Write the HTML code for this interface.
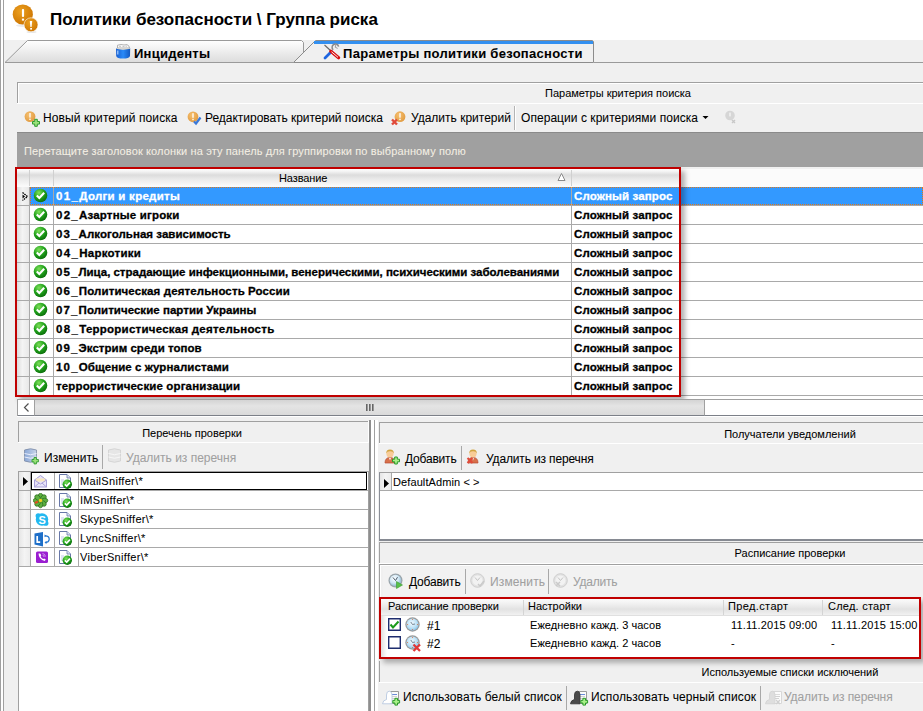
<!DOCTYPE html>
<html><head><meta charset="utf-8">
<style>
*{box-sizing:border-box;margin:0;padding:0}
html,body{width:923px;height:711px;overflow:hidden;background:#f0f0f0;font-family:"Liberation Sans",sans-serif;color:#000}
.a{position:absolute}
.t{position:absolute;white-space:nowrap;line-height:1;-webkit-text-stroke-width:0.06px}
.f11{font-size:11px}
.f12{font-size:12px}
.b{font-weight:bold}
.hdr{position:absolute;border-top:1px solid #a0a0a0;border-left:1px solid #a0a0a0;box-shadow:inset 1px 1px 0 #fff;background:#f0f0f0}
.hline{position:absolute;height:1px;background:#fff}
.sep{position:absolute;width:1px;background:#b4b4b4;box-shadow:1px 0 0 #fff}
.gl{position:absolute;background:#a9a9a9}
.dis{color:#a8a8a8}
</style></head><body>
<!-- left edge lines -->
<div class="a" style="left:0;top:0;width:1px;height:711px;background:#a0a0a0"></div>
<div class="a" style="left:1px;top:0;width:2px;height:711px;background:#fff"></div>
<div class="a" style="left:3px;top:0;width:1px;height:711px;background:#a0a0a0"></div>
<!-- title -->
<div class="a" style="left:4px;top:0;width:919px;height:40px;background:#fff"></div>
<div class="t b" style="left:50px;top:11px;font-size:17px">Политики безопасности \ Группа риска</div>


<!-- tabs -->
<svg class="a" style="left:0;top:0" width="923" height="70">
<defs>
<linearGradient id="tg1" x1="0" y1="0" x2="0" y2="1"><stop offset="0" stop-color="#ffffff"/><stop offset="1" stop-color="#dcdcdc"/></linearGradient>
<radialGradient id="og" cx="0.4" cy="0.35" r="0.7"><stop offset="0" stop-color="#eca020"/><stop offset="1" stop-color="#cc7400"/></radialGradient>
<linearGradient id="bg1" x1="0" y1="0" x2="1" y2="0"><stop offset="0" stop-color="#1a5fd0"/><stop offset="0.5" stop-color="#2a8af8"/><stop offset="1" stop-color="#1458c0"/></linearGradient>
</defs>
<polygon points="5,62.5 27.5,40.5 301.5,40.5 303.5,42.5 303.5,62.5" fill="url(#tg1)" stroke="#9a9a9a" stroke-width="1"/>
<polygon points="293.5,62.5 315.5,40.5 592.5,40.5 593.5,41.5 593.5,62.5" fill="#f0f0f0" stroke="#8c8c8c" stroke-width="1"/>
<rect x="314" y="41" width="279" height="3" fill="#3390f0"/>
<line x1="5" y1="62.5" x2="294" y2="62.5" stroke="#9a9a9a"/>
<line x1="594" y1="62.5" x2="923" y2="62.5" stroke="#9a9a9a"/>
<!-- title icon -->
<ellipse cx="23" cy="25.5" rx="7" ry="1.5" fill="#000" opacity="0.08"/>
<circle cx="22.8" cy="14.5" r="10.1" fill="url(#og)"/>
<rect x="21.9" y="9" width="2.2" height="8" fill="#fff" rx="1"/>
<rect x="21.9" y="18.6" width="2.2" height="2" fill="#fff"/>
<ellipse cx="31.5" cy="32" rx="5" ry="1" fill="#000" opacity="0.1"/>
<circle cx="31" cy="24.8" r="7" fill="url(#og)" stroke="#fff" stroke-width="0.6"/>
<path d="M29.8,21 L32.2,21 L31.6,27 L30.4,27 Z" fill="#fff"/>
<rect x="30.2" y="28" width="1.8" height="1.6" fill="#fff"/>
<!-- incidents icon -->
<path d="M117.5,48 L117.5,45.2 L121,44.5 L124,45 L127,44.6 L129,46.2 L129.5,48 Z" fill="#fafafa" stroke="#a0a0a0" stroke-width="0.8"/>
<path d="M119,46.3 h2 M122.5,46.5 h2 M125.5,46.2 h1.5" stroke="#b8b8b8" stroke-width="0.8"/>
<path d="M116,48.2 Q123,50.5 130.2,48.2 L130,56 Q129,58.6 123,58.6 Q117,58.6 116.2,56 Z" fill="url(#bg1)"/>
<path d="M116.5,48.4 Q123,50.4 129.8,48.4" fill="none" stroke="#f0e0c8" stroke-width="0.8"/>
<rect x="117.2" y="50.5" width="1.2" height="4" fill="#a8d0ff"/>
<!-- tools icon -->
<line x1="324.5" y1="45" x2="331" y2="51" stroke="#666" stroke-width="1.1"/>
<line x1="325" y1="58" x2="331.5" y2="51.5" stroke="#1f66e0" stroke-width="2.8" stroke-linecap="round"/>
<path d="M333.2,49.8 A3.3,3.3 0 1 1 338.6,46.6" fill="none" stroke="#8a8a8a" stroke-width="1.5"/>
<path d="M336,44.2 L335.2,47.2 L337.6,48.4" fill="none" stroke="#9a9a9a" stroke-width="1"/>
<line x1="330.8" y1="51.2" x2="338.6" y2="57.8" stroke="#d81010" stroke-width="3.2" stroke-linecap="round"/>
<line x1="331.5" y1="51.8" x2="338" y2="57.3" stroke="#fff" stroke-width="0.9"/>
</svg>
<div class="t b" style="left:134px;top:47px;font-size:13px;letter-spacing:0.25px">Инциденты</div>
<div class="t b" style="left:343px;top:47px;font-size:13px;letter-spacing:0.3px">Параметры политики безопасности</div>

<!-- search criteria panel header -->
<div class="hdr" style="left:17px;top:82px;width:906px;height:21px"></div>
<div class="a" style="left:17px;top:103px;width:906px;height:1px;background:#fff"></div>
<div class="t f11" style="left:545px;top:88px">Параметры критерия поиска</div>

<!-- toolbar -->
<div class="t f12" style="left:43px;top:112px;letter-spacing:0.1px">Новый критерий поиска</div>
<div class="t f12" style="left:205px;top:112px;letter-spacing:-0.02px">Редактировать критерий поиска</div>
<div class="t f12" style="left:411px;top:112px">Удалить критерий</div>
<div class="sep" style="left:514px;top:106px;height:24px"></div>
<div class="t f12" style="left:521px;top:112px;letter-spacing:0.05px">Операции с критериями поиска</div>

<!-- group panel -->
<div class="a" style="left:17px;top:132px;width:906px;height:35px;background:#a0a0a0;border-top:1px solid #8a8a8a"></div>
<div class="t f11" style="left:24px;top:146px;color:#f4efe4;letter-spacing:0.125px">Перетащите заголовок колонки на эту панель для группировки по выбранному полю</div>

<svg width="0" height="0" style="position:absolute"><defs>
<radialGradient id="gg" cx="0.38" cy="0.3" r="0.75"><stop offset="0" stop-color="#7ee05a"/><stop offset="0.55" stop-color="#1fa01a"/><stop offset="1" stop-color="#0a6a0a"/></radialGradient>
<symbol id="chk" viewBox="0 0 15 15"><circle cx="7.5" cy="7.5" r="6.8" fill="url(#gg)"/><path d="M3.8,7.6 L6.3,10 L11.2,4.8" fill="none" stroke="#fff" stroke-width="2.1"/></symbol>
</defs></svg>
<svg width="0" height="0" style="position:absolute"><defs>
<radialGradient id="og2" cx="0.4" cy="0.35" r="0.7"><stop offset="0" stop-color="#f6c070"/><stop offset="1" stop-color="#e09a40"/></radialGradient>
</defs></svg>
<svg class="a" style="left:20px;top:106px" width="24" height="22"><circle cx="10" cy="10.6" r="5.4" fill="url(#og2)"/><rect x="9.2" y="7.0" width="1.6" height="4.6" fill="#fff" opacity="0.85"/><rect x="9.2" y="12.6" width="1.6" height="1.4" fill="#fff" opacity="0.85"/><path d="M12.5,15.5 h2.2 v-2.2 h2.6 v2.2 h2.2 v2.6 h-2.2 v2.2 h-2.6 v-2.2 h-2.2 Z" fill="#9be27a" stroke="#2f9a2f" stroke-width="1"/></svg>
<svg class="a" style="left:183px;top:106px" width="24" height="22"><circle cx="10" cy="10.8" r="5.4" fill="url(#og2)"/><rect x="9.2" y="7.200000000000001" width="1.6" height="4.6" fill="#fff" opacity="0.85"/><rect x="9.2" y="12.8" width="1.6" height="1.4" fill="#fff" opacity="0.85"/><path d="M11,15.5 L13,17.5 L17.5,11.5" fill="none" stroke="#3a78d8" stroke-width="2.2"/></svg>
<svg class="a" style="left:387px;top:106px" width="24" height="22"><circle cx="13" cy="10.7" r="5.4" fill="url(#og2)"/><rect x="12.2" y="7.1" width="1.6" height="4.6" fill="#fff" opacity="0.85"/><rect x="12.2" y="12.7" width="1.6" height="1.4" fill="#fff" opacity="0.85"/><path d="M5,13.5 L10,18.5 M10,13.5 L5,18.5" stroke="#e04a3a" stroke-width="2.4"/></svg>
<svg class="a" style="left:702px;top:115px" width="8" height="6"><path d="M0.5,1 L6.5,1 L3.5,4 Z" fill="#000"/></svg>
<svg class="a" style="left:722px;top:108px" width="18" height="18"><circle cx="8" cy="7.5" r="4.8" fill="#d6d6d6"/><rect x="7.3" y="4.6" width="1.4" height="3.8" fill="#f4f4f4"/><path d="M10,12 L13,15 M13,12 L10,15" stroke="#c8c8c8" stroke-width="1.4"/></svg>
<!-- main grid -->
<div class="a" style="left:17px;top:169px;width:906px;height:230px;background:#fff"></div>
<div class="a" style="left:17px;top:169px;width:906px;height:18px;background:linear-gradient(#fdfdfd 0px,#f6f6f6 2px,#dcdcdc 6px,#ececec 11px,#fafafa 17px)"></div>
<div class="a" style="left:29px;top:170px;width:1px;height:16px;background:#d0d0d0"></div>
<div class="a" style="left:53px;top:170px;width:1px;height:16px;background:#d0d0d0"></div>
<div class="a" style="left:571px;top:170px;width:1px;height:16px;background:#d0d0d0"></div>
<div class="a" style="left:680px;top:170px;width:1px;height:16px;background:#d0d0d0"></div>
<div class="t f11" style="left:279px;top:173px;letter-spacing:-0.1px">Название</div>
<svg class="a" style="left:556px;top:171px" width="12" height="12"><path d="M5.5,2.5 L9,9.5 L2,9.5 Z" fill="#fff" stroke="#8a8a8a" stroke-width="1"/></svg>
<div class="a" style="left:17px;top:187px;width:12px;height:18px;background:linear-gradient(90deg,#dcdcdc,#f4f4f4 45%,#e8e8e8)"></div>
<div class="a" style="left:17px;top:205px;width:906px;height:1px;background:#a9a9a9"></div>
<div class="a" style="left:30px;top:187px;width:893px;height:18px;background:#3399ff"></div>
<div class="a" style="left:30px;top:187px;width:893px;height:18px;border:1px dotted #e07818"></div>
<svg class="a" style="left:20px;top:191px" width="9" height="11"><path d="M2.5,1.5 L7.5,5.5 L2.5,9.5" fill="none" stroke="#000" stroke-width="1.3" stroke-dasharray="1.6,0.8"/><path d="M2.5,3.5 L5,5.5 L2.5,7.5 Z" fill="#000"/></svg>
<svg class="a" style="left:33px;top:188px" width="15" height="15"><use href="#chk"/></svg>
<div class="t b" style="left:56px;top:191px;font-size:11.5px;color:#fff;letter-spacing:0.265px;-webkit-text-stroke:0.3px #fff"><span style="letter-spacing:1.365px">01_</span>Долги и кредиты</div>
<div class="t b" style="left:574px;top:191px;font-size:11.5px;color:#fff;letter-spacing:0.12px;-webkit-text-stroke:0.3px #fff">Сложный запрос</div>
<div class="a" style="left:17px;top:206px;width:12px;height:18px;background:linear-gradient(90deg,#dcdcdc,#f4f4f4 45%,#e8e8e8)"></div>
<div class="a" style="left:17px;top:224px;width:906px;height:1px;background:#a9a9a9"></div>
<svg class="a" style="left:33px;top:207px" width="15" height="15"><use href="#chk"/></svg>
<div class="t b" style="left:56px;top:210px;font-size:11.5px;color:#000;letter-spacing:0.176px;-webkit-text-stroke:0.3px #000"><span style="letter-spacing:1.276px">02_</span>Азартные игроки</div>
<div class="t b" style="left:574px;top:210px;font-size:11.5px;color:#000;letter-spacing:0.12px;-webkit-text-stroke:0.3px #000">Сложный запрос</div>
<div class="a" style="left:17px;top:225px;width:12px;height:18px;background:linear-gradient(90deg,#dcdcdc,#f4f4f4 45%,#e8e8e8)"></div>
<div class="a" style="left:17px;top:243px;width:906px;height:1px;background:#a9a9a9"></div>
<svg class="a" style="left:33px;top:226px" width="15" height="15"><use href="#chk"/></svg>
<div class="t b" style="left:56px;top:229px;font-size:11.5px;color:#000;letter-spacing:0.040px;-webkit-text-stroke:0.3px #000"><span style="letter-spacing:1.140px">03_</span>Алкогольная зависимость</div>
<div class="t b" style="left:574px;top:229px;font-size:11.5px;color:#000;letter-spacing:0.12px;-webkit-text-stroke:0.3px #000">Сложный запрос</div>
<div class="a" style="left:17px;top:244px;width:12px;height:18px;background:linear-gradient(90deg,#dcdcdc,#f4f4f4 45%,#e8e8e8)"></div>
<div class="a" style="left:17px;top:262px;width:906px;height:1px;background:#a9a9a9"></div>
<svg class="a" style="left:33px;top:245px" width="15" height="15"><use href="#chk"/></svg>
<div class="t b" style="left:56px;top:248px;font-size:11.5px;color:#000;letter-spacing:0.245px;-webkit-text-stroke:0.3px #000"><span style="letter-spacing:1.345px">04_</span>Наркотики</div>
<div class="t b" style="left:574px;top:248px;font-size:11.5px;color:#000;letter-spacing:0.12px;-webkit-text-stroke:0.3px #000">Сложный запрос</div>
<div class="a" style="left:17px;top:263px;width:12px;height:18px;background:linear-gradient(90deg,#dcdcdc,#f4f4f4 45%,#e8e8e8)"></div>
<div class="a" style="left:17px;top:281px;width:906px;height:1px;background:#a9a9a9"></div>
<svg class="a" style="left:33px;top:264px" width="15" height="15"><use href="#chk"/></svg>
<div class="t b" style="left:56px;top:267px;font-size:11.5px;color:#000;letter-spacing:-0.016px;-webkit-text-stroke:0.3px #000"><span style="letter-spacing:1.084px">05_</span>Лица, страдающие инфекционными, венерическими, психическими заболеваниями</div>
<div class="t b" style="left:574px;top:267px;font-size:11.5px;color:#000;letter-spacing:0.12px;-webkit-text-stroke:0.3px #000">Сложный запрос</div>
<div class="a" style="left:17px;top:282px;width:12px;height:18px;background:linear-gradient(90deg,#dcdcdc,#f4f4f4 45%,#e8e8e8)"></div>
<div class="a" style="left:17px;top:300px;width:906px;height:1px;background:#a9a9a9"></div>
<svg class="a" style="left:33px;top:283px" width="15" height="15"><use href="#chk"/></svg>
<div class="t b" style="left:56px;top:286px;font-size:11.5px;color:#000;letter-spacing:0.112px;-webkit-text-stroke:0.3px #000"><span style="letter-spacing:1.212px">06_</span>Политическая деятельность России</div>
<div class="t b" style="left:574px;top:286px;font-size:11.5px;color:#000;letter-spacing:0.12px;-webkit-text-stroke:0.3px #000">Сложный запрос</div>
<div class="a" style="left:17px;top:301px;width:12px;height:18px;background:linear-gradient(90deg,#dcdcdc,#f4f4f4 45%,#e8e8e8)"></div>
<div class="a" style="left:17px;top:319px;width:906px;height:1px;background:#a9a9a9"></div>
<svg class="a" style="left:33px;top:302px" width="15" height="15"><use href="#chk"/></svg>
<div class="t b" style="left:56px;top:305px;font-size:11.5px;color:#000;letter-spacing:0.038px;-webkit-text-stroke:0.3px #000"><span style="letter-spacing:1.138px">07_</span>Политические партии Украины</div>
<div class="t b" style="left:574px;top:305px;font-size:11.5px;color:#000;letter-spacing:0.12px;-webkit-text-stroke:0.3px #000">Сложный запрос</div>
<div class="a" style="left:17px;top:320px;width:12px;height:18px;background:linear-gradient(90deg,#dcdcdc,#f4f4f4 45%,#e8e8e8)"></div>
<div class="a" style="left:17px;top:338px;width:906px;height:1px;background:#a9a9a9"></div>
<svg class="a" style="left:33px;top:321px" width="15" height="15"><use href="#chk"/></svg>
<div class="t b" style="left:56px;top:324px;font-size:11.5px;color:#000;letter-spacing:0.242px;-webkit-text-stroke:0.3px #000"><span style="letter-spacing:1.342px">08_</span>Террористическая деятельность</div>
<div class="t b" style="left:574px;top:324px;font-size:11.5px;color:#000;letter-spacing:0.12px;-webkit-text-stroke:0.3px #000">Сложный запрос</div>
<div class="a" style="left:17px;top:339px;width:12px;height:18px;background:linear-gradient(90deg,#dcdcdc,#f4f4f4 45%,#e8e8e8)"></div>
<div class="a" style="left:17px;top:357px;width:906px;height:1px;background:#a9a9a9"></div>
<svg class="a" style="left:33px;top:340px" width="15" height="15"><use href="#chk"/></svg>
<div class="t b" style="left:56px;top:343px;font-size:11.5px;color:#000;letter-spacing:0.029px;-webkit-text-stroke:0.3px #000"><span style="letter-spacing:1.129px">09_</span>Экстрим среди топов</div>
<div class="t b" style="left:574px;top:343px;font-size:11.5px;color:#000;letter-spacing:0.12px;-webkit-text-stroke:0.3px #000">Сложный запрос</div>
<div class="a" style="left:17px;top:358px;width:12px;height:18px;background:linear-gradient(90deg,#dcdcdc,#f4f4f4 45%,#e8e8e8)"></div>
<div class="a" style="left:17px;top:376px;width:906px;height:1px;background:#a9a9a9"></div>
<svg class="a" style="left:33px;top:359px" width="15" height="15"><use href="#chk"/></svg>
<div class="t b" style="left:56px;top:362px;font-size:11.5px;color:#000;letter-spacing:0.075px;-webkit-text-stroke:0.3px #000"><span style="letter-spacing:1.175px">10_</span>Общение с журналистами</div>
<div class="t b" style="left:574px;top:362px;font-size:11.5px;color:#000;letter-spacing:0.12px;-webkit-text-stroke:0.3px #000">Сложный запрос</div>
<div class="a" style="left:17px;top:377px;width:12px;height:18px;background:linear-gradient(90deg,#dcdcdc,#f4f4f4 45%,#e8e8e8)"></div>
<div class="a" style="left:17px;top:395px;width:906px;height:1px;background:#a9a9a9"></div>
<svg class="a" style="left:33px;top:378px" width="15" height="15"><use href="#chk"/></svg>
<div class="t b" style="left:56px;top:381px;font-size:11.5px;color:#000;letter-spacing:0.137px;-webkit-text-stroke:0.3px #000">террористические организации</div>
<div class="t b" style="left:574px;top:381px;font-size:11.5px;color:#000;letter-spacing:0.12px;-webkit-text-stroke:0.3px #000">Сложный запрос</div>
<div class="a" style="left:29px;top:187px;width:1px;height:209px;background:#a9a9a9"></div>
<div class="a" style="left:53px;top:187px;width:1px;height:209px;background:#a9a9a9"></div>
<div class="a" style="left:571px;top:187px;width:1px;height:209px;background:#a9a9a9"></div>
<div class="a" style="left:680px;top:187px;width:1px;height:209px;background:#a9a9a9"></div>
<div class="a" style="left:681px;top:169px;width:242px;height:18px;background:#fbfbfb"></div>
<div class="a" style="left:15px;top:167px;width:666px;height:230px;border:2px solid #c00000;box-shadow:4px 4px 5px rgba(0,0,0,0.3)"></div>
<div class="a" style="left:17px;top:399px;width:906px;height:17px;background:#fff;border-top:1px solid #a0a0a0;border-bottom:1px solid #7c8088"></div>
<div class="a" style="left:17px;top:399px;width:1px;height:17px;background:#a0a0a0"></div>
<div class="a" style="left:34px;top:399px;width:671px;height:17px;background:linear-gradient(#d4d4d4,#e4e4e4 40%,#dadada);border:1px solid #a0a0a0;border-bottom:1px solid #7c8088"></div>
<svg class="a" style="left:22px;top:402px" width="10" height="12"><path d="M6.5,1.5 L2.5,5.5 L6.5,9.5" fill="none" stroke="#505050" stroke-width="1.2"/></svg>
<svg class="a" style="left:365px;top:403px" width="10" height="9"><rect x="1" y="1" width="1.6" height="7" fill="#666"/><rect x="4" y="1" width="1.6" height="7" fill="#666"/><rect x="7" y="1" width="1.6" height="7" fill="#666"/></svg>
<div class="a" style="left:17px;top:416px;width:906px;height:1px;background:#fff"></div>
<div class="a" style="left:369px;top:420px;width:2px;height:291px;background:#8e8e8e"></div>
<div class="a" style="left:371px;top:420px;width:3px;height:291px;background:#fff"></div>
<div class="a" style="left:374px;top:420px;width:1px;height:291px;background:#a0a0a0"></div>
<div class="a" style="left:375px;top:420px;width:3px;height:291px;background:#fff"></div>
<div class="a" style="left:18px;top:421px;width:351px;height:21px;border-top:1px solid #a0a0a0;border-left:1px solid #a0a0a0"></div>
<div class="a" style="left:18px;top:442px;width:351px;height:1px;background:#fff"></div>
<div class="t f11" style="left:-108px;top:428px;width:600px;text-align:center">Перечень проверки</div>
<div class="a" style="left:368px;top:421px;width:1px;height:21px;background:#fff"></div>
<svg class="a" style="left:22px;top:447px" width="18" height="18"><defs><linearGradient id="db" x1="0" y1="0" x2="1" y2="0"><stop offset="0" stop-color="#8aa8d8"/><stop offset="1" stop-color="#c8d4e8"/></linearGradient></defs><path d="M2.5,3 Q8.5,0.5 14.5,3 L14.5,14 Q8.5,16.5 2.5,14 Z" fill="url(#db)" stroke="#7c8aa4" stroke-width="0.8"/><path d="M2.5,6.5 Q8.5,9 14.5,6.5 M2.5,10 Q8.5,12.5 14.5,10" fill="none" stroke="#f0f4ff" stroke-width="0.9"/><path d="M10,12.5 h2 v-2 h2.4 v2 h2 v2.4 h-2 v2 h-2.4 v-2 h-2 Z" fill="#9be27a" stroke="#2f9a2f" stroke-width="0.9"/></svg>
<div class="t f12" style="left:44px;top:452px;letter-spacing:0px">Изменить</div>
<div class="a" style="left:102px;top:445px;width:1px;height:24px;background:#a8a8a8"></div>
<svg class="a" style="left:106px;top:447px" width="18" height="18"><path d="M2.5,3 Q8.5,0.5 14.5,3 L14.5,14 Q8.5,16.5 2.5,14 Z" fill="#e6e6e6" stroke="#d0d0d0" stroke-width="0.8"/><path d="M2.5,6.5 Q8.5,9 14.5,6.5 M2.5,10 Q8.5,12.5 14.5,10" fill="none" stroke="#f8f8f8" stroke-width="0.9"/></svg>
<div class="t f12" style="left:126px;top:452px;color:#a0a0a0;letter-spacing:0px">Удалить из перечня</div>
<div class="a" style="left:18px;top:471px;width:351px;height:240px;background:#fff;border-top:1px solid #a0a0a0;border-left:1px solid #a0a0a0;border-right:1px solid #a0a0a0"></div>
<div class="a" style="left:19px;top:472px;width:11px;height:18px;background:linear-gradient(90deg,#e6e6e6,#f4f4f4 50%,#ececec)"></div>
<div class="a" style="left:19px;top:490px;width:349px;height:1px;background:#a9a9a9"></div>
<svg class="a" style="left:33px;top:474px" width="18" height="17"><path d="M1.5,6 L7.5,1.5 L13.5,6 L13.5,13 L1.5,13 Z" fill="#e8e4f8" stroke="#a8a0d8" stroke-width="1"/><path d="M3,4.5 h9 v3 h-9 Z" fill="#f8e8c0"/><path d="M1.5,6 L7.5,10 L13.5,6 M1.5,13 L6,9 M13.5,13 L9,9" fill="none" stroke="#a8a0d8" stroke-width="1"/></svg>
<svg class="a" style="left:58px;top:473px" width="16" height="17"><path d="M1.5,1.5 L9,1.5 L12.5,5 L12.5,14.5 L1.5,14.5 Z" fill="#fff" stroke="#6878a8" stroke-width="1"/><path d="M9,1.5 L9,5 L12.5,5" fill="#dde4f4" stroke="#6878a8" stroke-width="0.8"/><path d="M3,7 h3 M3,9 h2.5 M3,11 h2.5" stroke="#b8c4e4" stroke-width="0.9"/><circle cx="9.3" cy="11.3" r="4.7" fill="url(#gg)"/><path d="M6.8,11.3 L8.7,13.1 L11.9,9.6" fill="none" stroke="#fff" stroke-width="1.6"/></svg>
<div class="t f11" style="left:80px;top:476px;letter-spacing:0.3px">MailSniffer\*</div>
<div class="a" style="left:19px;top:491px;width:11px;height:18px;background:linear-gradient(90deg,#e6e6e6,#f4f4f4 50%,#ececec)"></div>
<div class="a" style="left:19px;top:509px;width:349px;height:1px;background:#a9a9a9"></div>
<svg class="a" style="left:33px;top:493px" width="18" height="17"><g fill="#5cb040" stroke="#2e6a20" stroke-width="0.7"><ellipse cx="7.5" cy="3.4" rx="2.3" ry="3.2" transform="rotate(0 7.5 7.5)"/><ellipse cx="7.5" cy="3.4" rx="2.3" ry="3.2" transform="rotate(45 7.5 7.5)"/><ellipse cx="7.5" cy="3.4" rx="2.3" ry="3.2" transform="rotate(90 7.5 7.5)"/><ellipse cx="7.5" cy="3.4" rx="2.3" ry="3.2" transform="rotate(135 7.5 7.5)"/><ellipse cx="7.5" cy="3.4" rx="2.3" ry="3.2" transform="rotate(180 7.5 7.5)"/><ellipse cx="7.5" cy="3.4" rx="2.3" ry="3.2" transform="rotate(225 7.5 7.5)"/><ellipse cx="7.5" cy="3.4" rx="2.3" ry="3.2" transform="rotate(270 7.5 7.5)"/><ellipse cx="7.5" cy="3.4" rx="2.3" ry="3.2" transform="rotate(315 7.5 7.5)"/></g><circle cx="7.5" cy="7.5" r="1.8" fill="#f0d020"/><path d="M2,10 L5,8.5" stroke="#e05020" stroke-width="2"/></svg>
<svg class="a" style="left:58px;top:492px" width="16" height="17"><path d="M1.5,1.5 L9,1.5 L12.5,5 L12.5,14.5 L1.5,14.5 Z" fill="#fff" stroke="#6878a8" stroke-width="1"/><path d="M9,1.5 L9,5 L12.5,5" fill="#dde4f4" stroke="#6878a8" stroke-width="0.8"/><path d="M3,7 h3 M3,9 h2.5 M3,11 h2.5" stroke="#b8c4e4" stroke-width="0.9"/><circle cx="9.3" cy="11.3" r="4.7" fill="url(#gg)"/><path d="M6.8,11.3 L8.7,13.1 L11.9,9.6" fill="none" stroke="#fff" stroke-width="1.6"/></svg>
<div class="t f11" style="left:80px;top:495px;letter-spacing:0.3px">IMSniffer\*</div>
<div class="a" style="left:19px;top:510px;width:11px;height:18px;background:linear-gradient(90deg,#e6e6e6,#f4f4f4 50%,#ececec)"></div>
<div class="a" style="left:19px;top:528px;width:349px;height:1px;background:#a9a9a9"></div>
<svg class="a" style="left:34px;top:512px" width="18" height="17"><circle cx="8" cy="7.5" r="6.2" fill="#22b8f0"/><circle cx="4.2" cy="3.8" r="2.6" fill="#22b8f0"/><circle cx="11.8" cy="11.2" r="2.6" fill="#22b8f0"/><text x="8.1" y="11.7" font-family="Liberation Sans" font-weight="bold" font-size="11" fill="#fff" text-anchor="middle">S</text></svg>
<svg class="a" style="left:58px;top:511px" width="16" height="17"><path d="M1.5,1.5 L9,1.5 L12.5,5 L12.5,14.5 L1.5,14.5 Z" fill="#fff" stroke="#6878a8" stroke-width="1"/><path d="M9,1.5 L9,5 L12.5,5" fill="#dde4f4" stroke="#6878a8" stroke-width="0.8"/><path d="M3,7 h3 M3,9 h2.5 M3,11 h2.5" stroke="#b8c4e4" stroke-width="0.9"/><circle cx="9.3" cy="11.3" r="4.7" fill="url(#gg)"/><path d="M6.8,11.3 L8.7,13.1 L11.9,9.6" fill="none" stroke="#fff" stroke-width="1.6"/></svg>
<div class="t f11" style="left:80px;top:514px;letter-spacing:0.3px">SkypeSniffer\*</div>
<div class="a" style="left:19px;top:529px;width:11px;height:18px;background:linear-gradient(90deg,#e6e6e6,#f4f4f4 50%,#ececec)"></div>
<div class="a" style="left:19px;top:547px;width:349px;height:1px;background:#a9a9a9"></div>
<svg class="a" style="left:34px;top:531px" width="18" height="17"><path d="M0.5,2.5 L9,1 L9,15.5 L0.5,13.5 Z" fill="#1e6fc8"/><path d="M3.2,5 v6.2 h3" fill="none" stroke="#fff" stroke-width="1.7"/><path d="M11,4.8 Q15.5,5 15.2,8.5 Q14.8,11.5 11.5,11.5" fill="none" stroke="#2a7ad0" stroke-width="1.3"/><path d="M10.5,3.5 L12.5,4.8 L10.5,6.2 Z M12.5,10 L10.5,11.5 L12.5,13 Z" fill="#2a7ad0"/></svg>
<svg class="a" style="left:58px;top:530px" width="16" height="17"><path d="M1.5,1.5 L9,1.5 L12.5,5 L12.5,14.5 L1.5,14.5 Z" fill="#fff" stroke="#6878a8" stroke-width="1"/><path d="M9,1.5 L9,5 L12.5,5" fill="#dde4f4" stroke="#6878a8" stroke-width="0.8"/><path d="M3,7 h3 M3,9 h2.5 M3,11 h2.5" stroke="#b8c4e4" stroke-width="0.9"/><circle cx="9.3" cy="11.3" r="4.7" fill="url(#gg)"/><path d="M6.8,11.3 L8.7,13.1 L11.9,9.6" fill="none" stroke="#fff" stroke-width="1.6"/></svg>
<div class="t f11" style="left:80px;top:533px;letter-spacing:0.3px">LyncSniffer\*</div>
<div class="a" style="left:19px;top:548px;width:11px;height:18px;background:linear-gradient(90deg,#e6e6e6,#f4f4f4 50%,#ececec)"></div>
<div class="a" style="left:19px;top:566px;width:349px;height:1px;background:#a9a9a9"></div>
<svg class="a" style="left:34px;top:549px" width="18" height="17"><rect x="2" y="2.5" width="12" height="11.5" rx="1.5" fill="#9a1fd0"/><path d="M4.5,4.5 Q4.8,10.5 10.8,12 L11.8,10.6 L10.2,9.4 L9.2,10.1 Q7.2,9.2 6.6,7.2 L7.3,6.2 L6.1,4.4 Z" fill="#fff"/><path d="M8.5,4.5 Q11,4.8 11.5,7.5 M8.5,6.2 Q10,6.4 10.2,8" fill="none" stroke="#e8c8f8" stroke-width="0.7"/></svg>
<svg class="a" style="left:58px;top:549px" width="16" height="17"><path d="M1.5,1.5 L9,1.5 L12.5,5 L12.5,14.5 L1.5,14.5 Z" fill="#fff" stroke="#6878a8" stroke-width="1"/><path d="M9,1.5 L9,5 L12.5,5" fill="#dde4f4" stroke="#6878a8" stroke-width="0.8"/><path d="M3,7 h3 M3,9 h2.5 M3,11 h2.5" stroke="#b8c4e4" stroke-width="0.9"/><circle cx="9.3" cy="11.3" r="4.7" fill="url(#gg)"/><path d="M6.8,11.3 L8.7,13.1 L11.9,9.6" fill="none" stroke="#fff" stroke-width="1.6"/></svg>
<div class="t f11" style="left:80px;top:552px;letter-spacing:0.3px">ViberSniffer\*</div>
<div class="a" style="left:30px;top:472px;width:1px;height:94px;background:#a9a9a9"></div>
<div class="a" style="left:54px;top:472px;width:1px;height:94px;background:#a9a9a9"></div>
<div class="a" style="left:78px;top:472px;width:1px;height:94px;background:#a9a9a9"></div>
<div class="a" style="left:31px;top:472px;width:336px;height:18px;border:1px solid #000"></div>
<svg class="a" style="left:22px;top:476px" width="8" height="11"><path d="M1,1 L6,5.5 L1,10 Z" fill="#000"/></svg>
<div class="a" style="left:379px;top:422px;width:544px;height:21px;border-top:1px solid #a0a0a0;border-left:1px solid #a0a0a0"></div>
<div class="a" style="left:379px;top:443px;width:544px;height:1px;background:#fff"></div>
<div class="t f11" style="left:490px;top:429px;width:600px;text-align:center">Получатели уведомлений</div>
<svg class="a" style="left:382px;top:446px" width="20" height="20"><path d="M3,17 Q3,11.5 8,11.5 Q13,11.5 13,17 Z" fill="#d8704a" stroke="#b84a30" stroke-width="0.7"/><path d="M7,12 L8,14.5 L9,12 Z" fill="#f0f0f8"/><circle cx="8" cy="7.8" r="3.6" fill="#f8cc98"/><path d="M4.3,7.5 Q4,3.4 8,3.4 Q12,3.4 11.8,7.5 Q11,5 8,5.2 Q5,5 4.3,7.5 Z" fill="#d0a440"/><path d="M10.5,13.2 h2.2 v-2.2 h2.6 v2.2 h2.2 v2.6 h-2.2 v2.2 h-2.6 v-2.2 h-2.2 Z" fill="#a8f088" stroke="#2a9a2a" stroke-width="1"/></svg>
<div class="t f12" style="left:405px;top:453px;letter-spacing:-0.2px">Добавить</div>
<div class="a" style="left:461px;top:446px;width:1px;height:24px;background:#a8a8a8"></div>
<svg class="a" style="left:465px;top:446px" width="20" height="20"><path d="M3,17 Q3,11.5 8,11.5 Q13,11.5 13,17 Z" fill="#d8704a" stroke="#b84a30" stroke-width="0.7"/><path d="M7,12 L8,14.5 L9,12 Z" fill="#f0f0f8"/><circle cx="8" cy="7.8" r="3.6" fill="#f8cc98"/><path d="M4.3,7.5 Q4,3.4 8,3.4 Q12,3.4 11.8,7.5 Q11,5 8,5.2 Q5,5 4.3,7.5 Z" fill="#d0a440"/><path d="M2.5,12 L7.5,17 M7.5,12 L2.5,17" stroke="#e04a3a" stroke-width="2"/></svg>
<div class="t f12" style="left:486px;top:453px;letter-spacing:-0.15px">Удалить из перечня</div>
<div class="a" style="left:379px;top:472px;width:544px;height:69px;background:#fff;border-top:1px solid #a0a0a0;border-left:1px solid #8a8e96;border-bottom:2px solid #868a92"></div>
<div class="a" style="left:380px;top:473px;width:11px;height:17px;background:linear-gradient(90deg,#e6e6e6,#f4f4f4 50%,#ececec)"></div>
<div class="a" style="left:391px;top:473px;width:1px;height:17px;background:#a9a9a9"></div>
<div class="a" style="left:380px;top:490px;width:543px;height:1px;background:#a9a9a9"></div>
<svg class="a" style="left:383px;top:478px" width="8" height="11"><path d="M1,1 L6,5.5 L1,10 Z" fill="#000"/></svg>
<div class="t f11" style="left:393px;top:477px;letter-spacing:0.1px">DefaultAdmin &lt; &gt;</div>
<div class="a" style="left:379px;top:542px;width:544px;height:21px;border-top:1px solid #a0a0a0;border-left:1px solid #a0a0a0"></div>
<div class="a" style="left:379px;top:563px;width:544px;height:1px;background:#fff"></div>
<div class="t f11" style="left:490px;top:548px;width:600px;text-align:center">Расписание проверки</div>
<div class="a" style="left:379px;top:564px;width:544px;height:34px;border-top:1px solid #a0a0a0;border-left:1px solid #a0a0a0;box-shadow:inset 1px 1px 0 #fff"></div>
<div class="a" style="left:383px;top:567px;width:540px;height:30px;background:#f2f2f2"></div>
<svg class="a" style="left:387px;top:572px" width="19" height="19"><defs><radialGradient id="cf2" cx="0.4" cy="0.35" r="0.65"><stop offset="0" stop-color="#ffffff"/><stop offset="0.6" stop-color="#cfe6f4"/><stop offset="1" stop-color="#90b8d0"/></radialGradient></defs><circle cx="8.5" cy="8.5" r="7" fill="#9aa4aa"/><circle cx="8.5" cy="8.5" r="5.8" fill="url(#cf2)"/><path d="M8.5,8.5 L6,5.5 M8.5,8.5 L10.5,5.2" stroke="#4a5a6a" stroke-width="1"/><path d="M9.5,9.5 L15.5,13 L9.5,16.5 Z" fill="#58c048" stroke="#3a9a30" stroke-width="0.6"/></svg>
<div class="t f12" style="left:409px;top:576px;letter-spacing:-0.2px">Добавить</div>
<div class="a" style="left:465px;top:569px;width:1px;height:25px;background:#a8a8a8"></div>
<svg class="a" style="left:469px;top:572px" width="19" height="19"><circle cx="8.5" cy="8.5" r="6.8" fill="#e2e2e2" stroke="#cfcfcf" stroke-width="1"/><circle cx="8.5" cy="8.5" r="5" fill="#f2f2f2"/><path d="M8.5,8.5 L6,5.5 M8.5,8.5 L11,5.5" stroke="#c4c4c4" stroke-width="1"/><path d="M9,12 L11,14 L15,9" fill="none" stroke="#cacaca" stroke-width="1.5"/></svg>
<div class="t f12" style="left:490px;top:576px;color:#a0a0a0;letter-spacing:0.13px">Изменить</div>
<div class="a" style="left:548px;top:569px;width:1px;height:25px;background:#a8a8a8"></div>
<svg class="a" style="left:552px;top:572px" width="19" height="19"><circle cx="8.5" cy="8.5" r="6.8" fill="#e2e2e2" stroke="#cfcfcf" stroke-width="1"/><circle cx="8.5" cy="8.5" r="5" fill="#f2f2f2"/><path d="M8.5,8.5 L6,5.5 M8.5,8.5 L11,5.5" stroke="#c4c4c4" stroke-width="1"/><path d="M4,10 L8,14 M8,10 L4,14" stroke="#cacaca" stroke-width="1.5"/></svg>
<div class="t f12" style="left:573px;top:576px;color:#a0a0a0;letter-spacing:-0.2px">Удалить</div>
<div class="a" style="left:381px;top:599px;width:540px;height:59px;background:#fff"></div>
<div class="a" style="left:381px;top:599px;width:540px;height:17px;background:linear-gradient(#fbfbfb,#f0f0f0 30%,#e2e2e2 60%,#f4f4f4)"></div>
<div class="a" style="left:381px;top:615px;width:540px;height:1px;background:#e0e0e0"></div>
<div class="a" style="left:381px;top:616px;width:6px;height:42px;background:linear-gradient(90deg,#e0e0e0,#fff)"></div>
<div class="a" style="left:523px;top:600px;width:1px;height:15px;background:#d4d4d4"></div>
<div class="a" style="left:723px;top:600px;width:1px;height:15px;background:#d4d4d4"></div>
<div class="a" style="left:822px;top:600px;width:1px;height:15px;background:#d4d4d4"></div>
<div class="t f11" style="left:388px;top:601px;letter-spacing:0px">Расписание проверки</div>
<div class="t f11" style="left:528px;top:601px;">Настройки</div>
<div class="t f11" style="left:728px;top:601px;letter-spacing:0.37px">Пред.старт</div>
<div class="t f11" style="left:828px;top:601px;letter-spacing:0.24px">След. старт</div>
<div class="a" style="left:388px;top:618px;width:13px;height:13px;background:#fff;border:1px solid #1e2d6e;box-shadow:inset 0 0 0 0.4px #1e2d6e"></div>
<div class="t f11" style="left:427px;top:620px;font-size:12px">#1</div>
<div class="t f11" style="left:530px;top:620px;letter-spacing:0.05px">Ежедневно кажд. 3 часов</div>
<div class="t f11" style="left:731px;top:620px;letter-spacing:0.14px">11.11.2015 09:00</div>
<div class="t f11" style="left:831px;top:620px;letter-spacing:0.16px">11.11.2015 15:00</div>
<div class="a" style="left:388px;top:636px;width:13px;height:13px;background:#fff;border:1px solid #1e2d6e;box-shadow:inset 0 0 0 0.4px #1e2d6e"></div>
<div class="t f11" style="left:427px;top:638px;font-size:12px">#2</div>
<div class="t f11" style="left:530px;top:638px;letter-spacing:0.05px">Ежедневно кажд. 2 часов</div>
<div class="t f11" style="left:731px;top:638px;">-</div>
<div class="t f11" style="left:831px;top:638px;">-</div>
<svg class="a" style="left:389px;top:620px" width="11" height="10"><path d="M1.5,4.5 L4,7.5 L9.5,1.5" fill="none" stroke="#1a9a1a" stroke-width="2"/></svg>
<svg class="a" style="left:404px;top:616px" width="18" height="18"><defs><radialGradient id="cf" cx="0.45" cy="0.4" r="0.6"><stop offset="0" stop-color="#f4fbff"/><stop offset="0.7" stop-color="#b8def4"/><stop offset="1" stop-color="#8cc4e8"/></radialGradient></defs><circle cx="8.5" cy="8.5" r="7.2" fill="#9a9a9a"/><circle cx="8.5" cy="8.5" r="6" fill="url(#cf)"/><path d="M8.5,8.5 L6.8,6 M8.5,8.5 L11,8" stroke="#5a6a7a" stroke-width="0.8"/><circle cx="8.5" cy="3.5" r="0.5" fill="#e86a30"/><circle cx="8.5" cy="13.5" r="0.5" fill="#e86a30"/><circle cx="3.5" cy="8.5" r="0.5" fill="#e86a30"/><circle cx="13.5" cy="8.5" r="0.5" fill="#e86a30"/></svg>
<svg class="a" style="left:404px;top:634px" width="19" height="19"><defs><radialGradient id="cf" cx="0.45" cy="0.4" r="0.6"><stop offset="0" stop-color="#f4fbff"/><stop offset="0.7" stop-color="#b8def4"/><stop offset="1" stop-color="#8cc4e8"/></radialGradient></defs><circle cx="8.5" cy="8.5" r="7.2" fill="#9a9a9a"/><circle cx="8.5" cy="8.5" r="6" fill="url(#cf)"/><path d="M8.5,8.5 L6.8,6 M8.5,8.5 L11,8" stroke="#5a6a7a" stroke-width="0.8"/><circle cx="8.5" cy="3.5" r="0.5" fill="#e86a30"/><circle cx="8.5" cy="13.5" r="0.5" fill="#e86a30"/><circle cx="3.5" cy="8.5" r="0.5" fill="#e86a30"/><circle cx="13.5" cy="8.5" r="0.5" fill="#e86a30"/><path d="M9.5,10.5 L16,17 M16,10.5 L9.5,17" stroke="#e03838" stroke-width="2.3"/></svg>
<div class="a" style="left:379px;top:597px;width:542px;height:62px;border:2px solid #c00000;box-shadow:4px 4px 5px rgba(0,0,0,0.28)"></div>
<div class="a" style="left:379px;top:661px;width:544px;height:21px;border-left:1px solid #a0a0a0"></div>
<div class="a" style="left:379px;top:682px;width:544px;height:1px;background:#fff"></div>
<div class="t f11" style="left:490px;top:667px;width:600px;text-align:center">Используемые списки исключений</div>
<svg class="a" style="left:381px;top:688px" width="20" height="20"><path d="M9,3.5 L17.5,3.5 L17.5,15.5 L9,15.5 Z" fill="#fbfbfb" stroke="#9a9a9a" stroke-width="1"/><path d="M11,6.5 h5" stroke="#6a8ad8" stroke-width="1"/><path d="M11,8.5 h5 M11,10.5 h4" stroke="#c8c8c8" stroke-width="0.8"/><path d="M5.5,7 Q5.5,3.2 8.3,3.2 Q11,3.2 11,7 L11,15.8 L1.5,15.8 Q1.8,12.2 5.5,11.5 Z" fill="#ffffff" stroke="#b8c8e0" stroke-width="0.9"/><path d="M11.8,12.4 h2.1 v-2.1 h2.6 v2.1 h2.1 v2.6 h-2.1 v2.1 h-2.6 v-2.1 h-2.1 Z" fill="#a8f088" stroke="#2a9a2a" stroke-width="1"/></svg>
<div class="t f12" style="left:403px;top:691px;letter-spacing:0.09px">Использовать белый список</div>
<div class="a" style="left:566px;top:686px;width:1px;height:24px;background:#a8a8a8"></div>
<svg class="a" style="left:569px;top:688px" width="20" height="20"><path d="M9,3.5 L17.5,3.5 L17.5,15.5 L9,15.5 Z" fill="#fbfbfb" stroke="#9a9a9a" stroke-width="1"/><path d="M11,6.5 h5" stroke="#6a8ad8" stroke-width="1"/><path d="M11,8.5 h5 M11,10.5 h4" stroke="#c8c8c8" stroke-width="0.8"/><path d="M5.5,7 Q5.5,3.2 8.3,3.2 Q11,3.2 11,7 L11,15.8 L1.5,15.8 Q1.8,12.2 5.5,11.5 Z" fill="#4a4a4a" stroke="#3a3a3a" stroke-width="0.9"/><path d="M11.8,12.4 h2.1 v-2.1 h2.6 v2.1 h2.1 v2.6 h-2.1 v2.1 h-2.6 v-2.1 h-2.1 Z" fill="#a8f088" stroke="#2a9a2a" stroke-width="1"/></svg>
<div class="t f12" style="left:591px;top:691px;letter-spacing:0.09px">Использовать черный список</div>
<div class="a" style="left:760px;top:686px;width:1px;height:24px;background:#a8a8a8"></div>
<svg class="a" style="left:764px;top:688px" width="20" height="20"><path d="M9,3.5 L17.5,3.5 L17.5,15.5 L9,15.5 Z" fill="#fbfbfb" stroke="#d8d8d8" stroke-width="1"/><path d="M11,6.5 h5" stroke="#dcdcdc" stroke-width="1"/><path d="M11,8.5 h5 M11,10.5 h4" stroke="#c8c8c8" stroke-width="0.8"/><path d="M5.5,7 Q5.5,3.2 8.3,3.2 Q11,3.2 11,7 L11,15.8 L1.5,15.8 Q1.8,12.2 5.5,11.5 Z" fill="#dedede" stroke="#d4d4d4" stroke-width="0.9"/><path d="M12,12 L16,16 M16,12 L12,16" stroke="#d0d0d0" stroke-width="1.4"/></svg>
<div class="t f12" style="left:784px;top:691px;color:#a0a0a0;letter-spacing:-0.09px">Удалить из перечня</div>
</body></html>
